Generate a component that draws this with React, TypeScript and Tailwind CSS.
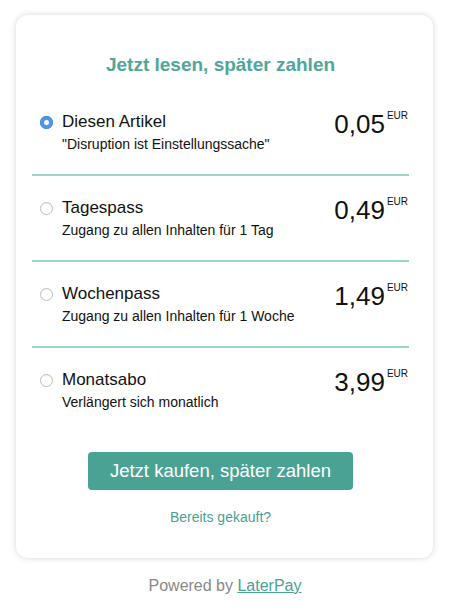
import React from "react";

type Option = { title: string; subtitle: string; price: string; checked?: boolean };

const options: Option[] = [
  { title: "Diesen Artikel", subtitle: '"Disruption ist Einstellungssache"', price: "0,05", checked: true },
  { title: "Tagespass", subtitle: "Zugang zu allen Inhalten für 1 Tag", price: "0,49" },
  { title: "Wochenpass", subtitle: "Zugang zu allen Inhalten für 1 Woche", price: "1,49" },
  { title: "Monatsabo", subtitle: "Verlängert sich monatlich", price: "3,99" },
];

function Radio({ checked }: { checked?: boolean }) {
  if (checked) {
    return (
      <div className="flex h-[13px] w-[13px] shrink-0 items-center justify-center rounded-full bg-[#4f95ea] shadow-[inset_0_0_0_0.5px_#3a7fd5]">
        <div className="h-[5px] w-[5px] rounded-full bg-white" />
      </div>
    );
  }
  return (
    <div className="box-border h-[13px] w-[13px] shrink-0 rounded-full border border-[#bdbdbd] bg-white shadow-[inset_0_1px_1px_rgba(0,0,0,0.06)]" />
  );
}

export default function App() {
  return (
    <div className="min-h-[613px] bg-white pt-[15px] font-['Liberation_Sans',Arial,sans-serif]">
      <div className="ml-[16px] w-[417px] rounded-[12px] bg-white pl-4 pr-6 pt-[38px] pb-[31px] shadow-[0_0_6px_rgba(0,0,0,0.16)]">
        <h1 className="text-center text-[19px] font-bold leading-[24px] text-[#4fa69a]">
          Jetzt lesen, später zahlen
        </h1>
        <div className="mt-[13px]">
          {options.map((o, i) => (
            <div key={o.title}>
              <div className="flex items-start pl-[8px] pt-[22px] pb-[20px]">
                <div className="mt-[4px]">
                  <Radio checked={o.checked} />
                </div>
                <div className="ml-[9px] flex-1">
                  <div className="text-[17px] leading-[20px] text-[#111]">{o.title}</div>
                  <div className="mt-[2px] text-[14px] leading-[20px] text-[#111]">{o.subtitle}</div>
                </div>
                <div className="-mt-[1px] mr-[1px] flex items-start">
                  <span className="text-[26px] leading-[26px] text-[#111]">{o.price}</span>
                  <span className="ml-[2px] text-[10px] leading-[10px] text-[#111]">EUR</span>
                </div>
              </div>
              {i < options.length - 1 ? <div className="h-[2px] bg-[#9ad4cb]" /> : <div className="h-[2px]" />}
            </div>
          ))}
        </div>
        <div className="mt-[18px] flex justify-center">
          <button className="h-[38px] rounded-[4px] bg-[#4aa295] px-[22px] text-[18.5px] leading-[22px] text-white">
            Jetzt kaufen, später zahlen
          </button>
        </div>
        <div className="mt-[17px] text-center text-[14px] leading-[20px] text-[#4a9f93]">Bereits gekauft?</div>
      </div>
      <div className="mt-[18px] text-center text-[16px] leading-[20px] text-[#888]">
        Powered by <span className="text-[#4aa295] underline">LaterPay</span>
      </div>
    </div>
  );
}
